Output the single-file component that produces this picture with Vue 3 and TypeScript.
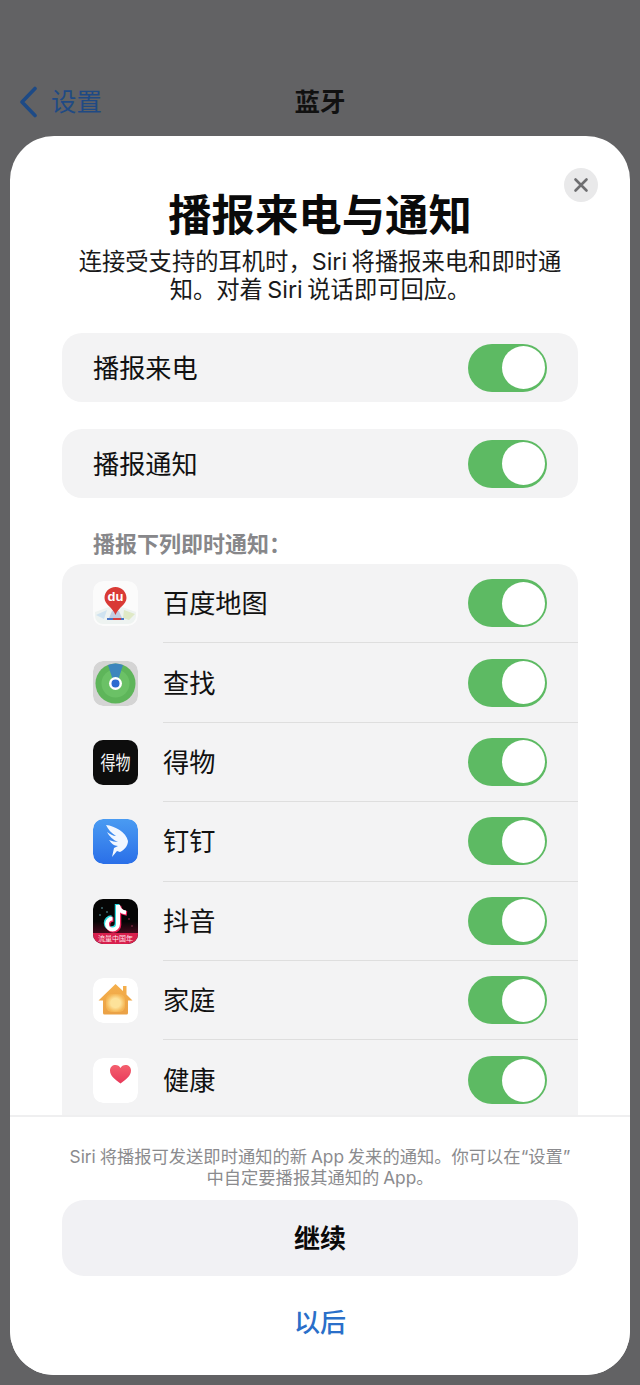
<script setup lang="ts">
const top = ['播报来电', '播报通知']
const apps = [
  { name: '百度地图', icon: 'baidu' },
  { name: '查找', icon: 'find' },
  { name: '得物', icon: 'dewu' },
  { name: '钉钉', icon: 'ding' },
  { name: '抖音', icon: 'tiktok' },
  { name: '家庭', icon: 'home' },
  { name: '健康', icon: 'health' },
]
</script>

<template>
  <div class="page">
    <header class="nav">
      <div class="back">
        <svg width="20" height="32" viewBox="0 0 20 32"><path d="M17 2.500 4 16l13 13.500" fill="none" stroke="#1d4a86" stroke-width="3.600" stroke-linecap="round" stroke-linejoin="round"/></svg>
        <span>设置</span>
      </div>
      <div class="nav-title">蓝牙</div>
    </header>

    <main class="card">
      <button class="close" aria-label="关闭">
        <svg width="16" height="16" viewBox="0 0 16 16"><path d="M2.500 2.500l11 11M13.500 2.500l-11 11" stroke="#6e6e70" stroke-width="2.600" stroke-linecap="round"/></svg>
      </button>

      <section class="content">
        <h1>播报来电与通知</h1>
        <p class="sub">连接受支持的耳机时，Siri 将播报来电和即时通<br />知。对着 Siri 说话即可回应。</p>

        <div v-for="t in top" :key="t" class="group single">
          <span class="label">{{ t }}</span>
          <span class="toggle"><i></i></span>
        </div>

        <div class="section-title">播报下列即时通知：</div>

        <div class="group list">
          <div v-for="a in apps" :key="a.name" class="row">
            <svg v-if="a.icon === 'baidu'" class="icon" viewBox="0 0 45 45">
              <rect width="45" height="45" rx="10" fill="#fbfbfb"/>
              <path d="M2 31 16 26h13l14 5v4a8 8 0 0 1-8 8H10a8 8 0 0 1-8-8z" fill="#eef3f1"/>
              <path d="M3 34l11-5-3 9z" fill="#cfe3f0"/>
              <path d="M31 29l11 4-6 6-6-2z" fill="#dfe9c6"/>
              <path d="M19 30h7l3 7H16z" fill="#c3cfe2"/>
              <rect x="14" y="37" width="17" height="2" fill="#4a78c8"/>
              <rect x="20" y="37" width="8" height="2" fill="#d5403f"/>
              <path d="M22.500 6C16 6 11.500 11 11.500 17c0 6.500 8 9 11 17 3-8 11-10.500 11-17 0-6-4.500-11-11-11z" fill="#d93a35"/>
              <text x="22.500" y="20" text-anchor="middle" class="du">du</text>
            </svg>

            <svg v-else-if="a.icon === 'find'" class="icon" viewBox="0 0 45 45">
              <rect width="45" height="45" rx="10" fill="#d4d4d4"/>
              <circle cx="22.500" cy="22.500" r="20" fill="#5eb55a"/>
              <circle cx="22.500" cy="22.500" r="14" fill="#6bc166"/>
              <path d="M15 4a20 20 0 0 1 15 0L24.500 21h-4z" fill="#3d86bd"/>
              <circle cx="22.500" cy="22.500" r="6.500" fill="#fff"/>
              <circle cx="22.500" cy="22.500" r="4" fill="#2d6bd0"/>
            </svg>

            <div v-else-if="a.icon === 'dewu'" class="icon dewu"><span>得物</span></div>

            <svg v-else-if="a.icon === 'ding'" class="icon" viewBox="0 0 45 45">
              <defs>
                <linearGradient id="dingBg" x1="0" y1="0" x2="0" y2="1">
                  <stop offset="0" stop-color="#4a9bf2"/>
                  <stop offset="1" stop-color="#2a6fe8"/>
                </linearGradient>
              </defs>
              <rect width="45" height="45" rx="10" fill="url(#dingBg)"/>
              <path d="M13 6C22 7 33 13 35 22 35 27 31 31 27 33L24 32 19 38 21 29 25 27C21 27 18 24 16 21 19 22 22 23 25 23 20 21 16 17 14 13 17 15 20 17 23 17 18 14 15 10 13 6z" fill="#f2f7ff"/>
            </svg>

            <div v-else-if="a.icon === 'tiktok'" class="icon tiktok">
              <svg viewBox="0 0 45 45" width="45" height="45">
                <circle cx="9" cy="9" r="1" fill="#3f6a70"/><circle cx="14" cy="13" r="1" fill="#3f6a70"/><circle cx="7" cy="16" r="1" fill="#3f6a70"/><circle cx="36" cy="20" r="1" fill="#6d2438"/><circle cx="39" cy="27" r="1" fill="#6d2438"/>
                <path d="M25 6v19a5.500 5.500 0 1 1-5.500-5.500" fill="none" stroke="#2bd7dc" stroke-width="4.500" transform="translate(-1 -1)"/>
                <path d="M25 6v19a5.500 5.500 0 1 1-5.500-5.500M25 6c.5 4 3.500 7 8 7.500" fill="none" stroke="#f0215a" stroke-width="4.500" transform="translate(1 1)"/>
                <path d="M25 6v19a5.500 5.500 0 1 1-5.500-5.500M25 6c.5 4 3.500 7 8 7.500" fill="none" stroke="#fff" stroke-width="4"/>
              </svg>
              <span>流量中国年</span>
            </div>

            <svg v-else-if="a.icon === 'home'" class="icon" viewBox="0 0 45 45">
              <defs>
                <linearGradient id="homeBg" x1="0" y1="0" x2="0" y2="1">
                  <stop offset="0" stop-color="#f5b04c"/>
                  <stop offset="1" stop-color="#eaa146"/>
                </linearGradient>
                <radialGradient id="homeGlow">
                  <stop offset="0.500" stop-color="#fde29a"/>
                  <stop offset="1" stop-color="#f5b655"/>
                </radialGradient>
              </defs>
              <rect width="45" height="45" rx="10" fill="#fff"/>
              <path d="M22.500 6 30 13V8h3.500v8.500L39.500 22.500H35V35a1.500 1.500 0 0 1-1.500 1.500h-22A1.500 1.500 0 0 1 10 35V22.500H5.500z" fill="url(#homeBg)"/>
              <rect x="13" y="16" width="19" height="18" rx="6" fill="url(#homeGlow)"/>
            </svg>

            <svg v-else class="icon" viewBox="0 0 45 45">
              <defs>
                <linearGradient id="heartBg" x1="0" y1="0" x2="0" y2="1">
                  <stop offset="0" stop-color="#f4606e"/>
                  <stop offset="1" stop-color="#e8395a"/>
                </linearGradient>
              </defs>
              <rect width="45" height="45" rx="10" fill="#fff"/>
              <path d="M27.500 25.500C22 21.500 17 18 17 12.500 17 9 19.500 7 22.500 7c2.200 0 4 1.100 5 3 1-1.900 2.800-3 5-3 3 0 5.500 2 5.500 5.500 0 5.500-5 9-10.500 13z" fill="url(#heartBg)"/>
            </svg>

            <div class="row-main">
              <span class="label">{{ a.name }}</span>
              <span class="toggle"><i></i></span>
            </div>
          </div>
        </div>
      </section>

      <footer class="foot">
        <p class="note">Siri 将播报可发送即时通知的新 App 发来的通知。你可以在“设置”<br />中自定要播报其通知的 App。</p>
        <button class="primary">继续</button>
        <button class="later">以后</button>
      </footer>
    </main>
  </div>
</template>

<style>
html, body { margin: 0; background: #626264; }
</style>

<style scoped>
.page {
  width: 640px;
  height: 1385px;
  overflow: hidden;
  background: #626264;
  font-family: Inter, "Noto Sans CJK SC", sans-serif;
  display: flex;
  flex-direction: column;
}
.nav {
  height: 136px;
  flex: none;
  position: relative;
  display: flex;
  align-items: flex-start;
  justify-content: center;
  padding-top: 86px;
  box-sizing: border-box;
}
.back {
  position: absolute;
  left: 18px;
  top: 86px;
  display: flex;
  align-items: center;
  gap: 13px;
  color: #1f4a84;
  font-size: 25.500px;
  line-height: 32px;
}
.nav-title {
  font-size: 25.500px;
  line-height: 32px;
  font-weight: 700;
  color: #111;
}
.card {
  position: relative;
  width: 620px;
  height: 1239px;
  margin-left: 10px;
  background: #fff;
  border-radius: 44px;
  overflow: hidden;
  display: flex;
  flex-direction: column;
}
.close {
  position: absolute;
  right: 32px;
  top: 32px;
  width: 34px;
  height: 34px;
  border: 0;
  padding: 0;
  border-radius: 50%;
  background: #e9e9ea;
  display: flex;
  align-items: center;
  justify-content: center;
}
.content {
  flex: 1;
  min-height: 0;
  overflow: hidden;
  padding: 0 52px;
}
h1 {
  margin: 52px 0 0;
  text-align: center;
  font-size: 43.400px;
  line-height: 54px;
  font-weight: 700;
  color: #0a0a0a;
}
.sub {
  margin: 6px -20px 0;
  text-align: center;
  font-size: 23.300px;
  line-height: 28px;
  color: #1a1a1a;
  word-spacing: -2px;
}
.group {
  background: #f3f3f4;
  border-radius: 20px;
}
.single {
  height: 69px;
  margin-top: 27px;
  display: flex;
  align-items: center;
  justify-content: space-between;
  padding: 0 31px;
}
.sub + .single {
  margin-top: 29px;
}
.label {
  font-size: 26.200px;
  line-height: 34px;
  padding-top: 2px;
  color: #111;
}
.toggle {
  width: 79px;
  height: 48px;
  flex: none;
  box-sizing: border-box;
  border-radius: 24px;
  background: #5dba63;
  position: relative;
  display: block;
}
.toggle i {
  position: absolute;
  right: 2.500px;
  top: 2.500px;
  width: 43px;
  height: 43px;
  border-radius: 50%;
  background: #fff;
}
.section-title {
  margin: 31px 0 0 31px;
  font-size: 22px;
  line-height: 30px;
  font-weight: 700;
  color: #87878a;
}
.list {
  margin-top: 5px;
  padding-left: 31px;
  padding-bottom: 30px;
}
.row {
  display: flex;
  align-items: center;
  gap: 25px;
  height: 79.400px;
}
.icon {
  width: 45px;
  height: 45px;
  flex: none;
  border-radius: 10px;
  display: block;
}
.du {
  font: 700 13px "Liberation Sans", sans-serif;
  fill: #fff;
}
.dewu {
  background: #0d0d0d;
  color: #f4f4f4;
  display: flex;
  align-items: center;
  justify-content: center;
  font-size: 15px;
  line-height: 1;
  font-weight: 400;
}
.dewu span {
  display: block;
  transform: scaleY(1.3);
}
.tiktok {
  background: linear-gradient(#050505 50%, #4a0a1e 78%, #050505 78%);
  position: relative;
  overflow: hidden;
}
.tiktok svg {
  display: block;
}
.tiktok span {
  position: absolute;
  left: 0;
  right: 0;
  bottom: 0;
  height: 11px;
  background: #d81f4d;
  color: #ffe0e6;
  font-size: 7px;
  line-height: 11px;
  text-align: center;
}
.row-main {
  flex: 1;
  height: 100%;
  display: flex;
  align-items: center;
  justify-content: space-between;
  padding-right: 31px;
  border-bottom: 1px solid #dedede;
  box-sizing: border-box;
}
.row:last-child .row-main {
  border-bottom: 0;
}
.foot {
  height: 260px;
  flex: none;
  box-sizing: border-box;
  border-top: 2px solid #efeff0;
  background: #fff;
  padding: 29px 52px 0;
  text-align: center;
}
.note {
  margin: 0 -10px;
  font-size: 17.300px;
  line-height: 21px;
  color: #8b8b8e;
  word-spacing: -1px;
}
.primary {
  display: block;
  width: 100%;
  height: 76px;
  margin-top: 12px;
  border: 0;
  padding: 2px 0 0;
  border-radius: 22px;
  background: #f1f1f4;
  font: 700 26px/34px Inter, "Noto Sans CJK SC", sans-serif;
  color: #0a0a0a;
}
.later {
  display: block;
  width: 100%;
  height: 40px;
  margin-top: 27px;
  border: 0;
  padding: 0;
  background: none;
  font: 500 26px/34px Inter, "Noto Sans CJK SC", sans-serif;
  color: #2a6fc9;
}
</style>
